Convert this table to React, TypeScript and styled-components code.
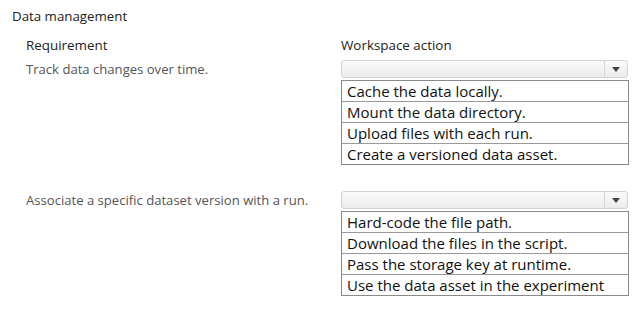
import React from 'react';
import styled, { createGlobalStyle } from 'styled-components';

const GlobalStyle = createGlobalStyle`
  body {
    margin: 0;
    background: #ffffff;
    font-family: "Open Sans", "Noto Sans", sans-serif;
  }
`;

const Page = styled.div`
  width: 643px;
  height: 320px;
  padding: 8px 0 0 12px;
  box-sizing: border-box;
  background: #fff;
`;

const Title = styled.div`
  font-size: 13.3px;
  line-height: 16px;
  color: #222;
`;

const Table = styled.div`
  display: grid;
  grid-template-columns: 315px 288px;
  margin: 13px 0 0 14px;
`;

const HeadCell = styled.div`
  font-size: 13.4px;
  line-height: 16px;
  color: #222;
  margin-bottom: 7px;
`;

const Label = styled.div`
  font-size: 13.1px;
  line-height: 17px;
  color: #555;
  padding-top: 1px;
`;

const Field = styled.div<{ $gap?: number }>`
  display: flex;
  flex-direction: column;
  gap: 2px;
  margin-bottom: ${(p) => p.$gap ?? 0}px;
`;

const Select = styled.div`
  width: 287px;
  height: 18px;
  box-sizing: border-box;
  border: 1px solid #d2d2d2;
  border-radius: 3px;
  background: linear-gradient(#fafafa, #ececec);
  display: flex;
  justify-content: flex-end;
`;

const Arrow = styled.div`
  width: 22px;
  border-left: 1px solid #d6d6d6;
  display: flex;
  align-items: center;
  justify-content: center;

  &::after {
    content: '';
    border-left: 4px solid transparent;
    border-right: 4px solid transparent;
    border-top: 5px solid #444;
  }
`;

const Options = styled.div`
  width: 288px;
  box-sizing: border-box;
  border: 1px solid #8a8a8a;
`;

const Option = styled.div`
  height: 20px;
  line-height: 20px;
  padding-left: 5px;
  font-size: 15px;
  color: #111;
  white-space: nowrap;
  border-top: 1px solid #9a9a9a;

  &:first-child {
    border-top: none;
  }
`;

const rows = [
  {
    requirement: 'Track data changes over time.',
    options: [
      'Cache the data locally.',
      'Mount the data directory.',
      'Upload files with each run.',
      'Create a versioned data asset.',
    ],
  },
  {
    requirement: 'Associate a specific dataset version with a run.',
    options: [
      'Hard-code the file path.',
      'Download the files in the script.',
      'Pass the storage key at runtime.',
      'Use the data asset in the experiment',
    ],
  },
];

const App = () => {
  return (
    <>
      <GlobalStyle />
      <Page>
        <Title>Data management</Title>
        <Table>
          <HeadCell>Requirement</HeadCell>
          <HeadCell>Workspace action</HeadCell>
          {rows.map((r, i) => (
            <React.Fragment key={i}>
              <Label>{r.requirement}</Label>
              <Field $gap={i === 0 ? 26 : 0}>
                <Select>
                  <Arrow />
                </Select>
                <Options>
                  {r.options.map((o) => (
                    <Option key={o}>{o}</Option>
                  ))}
                </Options>
              </Field>
            </React.Fragment>
          ))}
        </Table>
      </Page>
    </>
  );
};

export default App;
